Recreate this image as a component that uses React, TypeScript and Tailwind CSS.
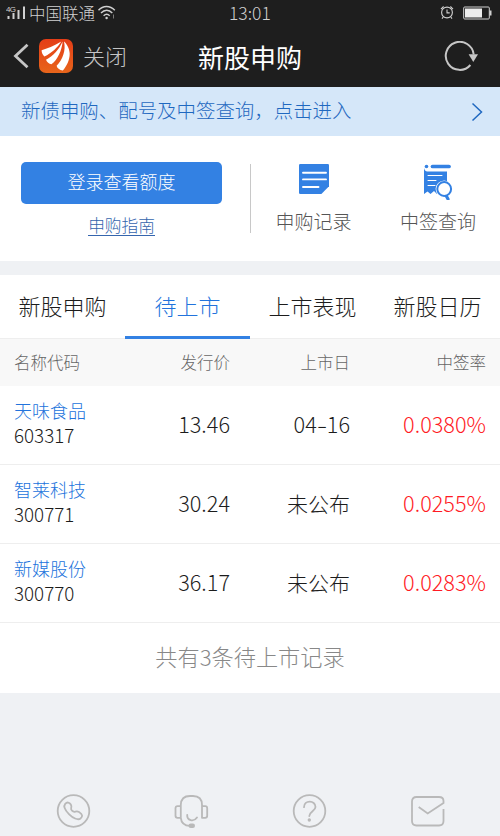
import React from 'react';

const stocks = [
  { name: '天味食品', code: '603317', price: '13.46', date: '04-16', rate: '0.0380%' },
  { name: '智莱科技', code: '300771', price: '30.24', date: '未公布', rate: '0.0255%' },
  { name: '新媒股份', code: '300770', price: '36.17', date: '未公布', rate: '0.0283%' },
];

const tabs = ['新股申购', '待上市', '上市表现', '新股日历'];

const StatusBar: React.FC = () => (
  <div className="flex h-[27px] items-center pb-[2px] pl-[6px] pr-[8px] text-[#d0d0d0]">
    <svg width="20" height="16" viewBox="0 0 20 16" fill="currentColor">
      <text x="0" y="6.5" fontSize="8" fontWeight="400" fontFamily="Liberation Sans" textLength="10">4G</text>
      <rect x="1.5" y="11" width="2" height="3" />
      <rect x="6.5" y="8" width="2" height="6" />
      <rect x="11.5" y="5" width="2" height="9" />
      <rect x="17" y="1.5" width="2" height="12.5" />
    </svg>
    <span className="ml-[3px] w-[67px] whitespace-nowrap text-[16.5px] leading-[24px]">中国联通</span>
    <svg className="ml-px" width="20" height="17" viewBox="0 0 20 17" fill="none" stroke="currentColor" strokeWidth="1.4">
      <path d="M1.5 6.2C6 1.2 13 1.2 17.8 6.2M4 9C7.5 5.3 12 5.3 15.3 9M6.6 11.7C8.6 9.8 10.8 9.8 12.7 11.7" />
      <circle cx="9.6" cy="14" r="1.2" fill="currentColor" stroke="none" />
      <path d="M16.5 10.5v4" strokeWidth="1" opacity="0.5" />
    </svg>
    <span className="ml-[112px] w-[45px] text-[17.5px] leading-[24px]">13:01</span>
    <svg className="ml-auto" width="14" height="15" viewBox="0 0 14 15" fill="none" stroke="currentColor" strokeWidth="1.1">
      <circle cx="7" cy="7.5" r="5.4" />
      <path d="M7 4.5v3.4h2.7M1 4.2L3.6 1.5M13 4.2L10.4 1.5M3.2 12L2 13.6M10.8 12l1.2 1.6" />
    </svg>
    <svg className="ml-[9px]" width="29" height="14" viewBox="0 0 29 14">
      <rect x="0.7" y="1" width="25.6" height="12" rx="1" fill="none" stroke="currentColor" />
      <rect x="2" y="2.5" width="17" height="9" fill="#ececec" />
      <rect x="26.5" y="4.5" width="2" height="5" fill="currentColor" />
    </svg>
  </div>
);

const Header: React.FC = () => (
  <div className="grid h-[60px] grid-cols-[1fr_120px_1fr] items-center pb-[3px]">
    <div className="flex items-center pl-[13px]">
      <svg width="16" height="26" viewBox="0 0 16 26" fill="none" stroke="#c6c6c6" strokeWidth="2.8">
        <path d="M14.5 1.8L2.5 13L14.5 24.2" />
      </svg>
      <svg className="ml-[10px]" width="34" height="34" viewBox="0 0 34 34">
        <defs>
          <linearGradient id="logo" x1="0" y1="0" x2="0" y2="1">
            <stop offset="0" stopColor="#e43d17" />
            <stop offset="1" stopColor="#e8651b" />
          </linearGradient>
        </defs>
        <rect width="34" height="34" rx="7" fill="url(#logo)" />
        <path d="M2.6 11.2C8 9.5 15 7 22.3 2.5C19 8 12.5 14.5 5.4 17.4C3.4 15.5 2.6 13.4 2.6 11.2Z" fill="#fff" />
        <path d="M23.6 2.4C23 11 18.5 21 12.4 25.2C10 25 8 23.2 7 20.7C14 17 20.2 10.2 23.6 2.4Z" fill="#fff" />
        <path d="M25 2.4C28 5 30.5 9.7 30.7 14.5C30.8 21 27.5 27.5 23.8 31.5C20.5 31 18 29 17.6 26.7C24 20 27 11 25 2.4Z" fill="#fff" />
      </svg>
      <span className="ml-[10px] text-[22px] text-[#c4c4c4]">关闭</span>
    </div>
    <h1 className="whitespace-nowrap pt-[3px] text-center text-[26px] font-normal leading-[36px] text-white">新股申购</h1>
    <div className="flex justify-end pr-[21px] pt-[2px]">
      <svg width="35" height="32" viewBox="0 0 35 32">
        <path d="M26.4 24A14 14 0 1 1 29.7 13.5" fill="none" stroke="#c6c6c6" strokeWidth="2" />
        <path d="M24.6 13.2H34L29.3 21Z" fill="#c6c6c6" />
      </svg>
    </div>
  </div>
);

const Banner: React.FC = () => (
  <div className="flex h-[49px] items-center justify-between bg-[#d5e7f9] pl-[21px] pr-[17px] text-[#1f68c0]">
    <span className="whitespace-nowrap pb-[4px] text-[19.45px] leading-[28px]">新债申购、配号及中签查询，点击进入</span>
    <svg width="12" height="20" viewBox="0 0 12 20" fill="none" stroke="currentColor" strokeWidth="1.5">
      <path d="M1.5 1.5L10.5 10L1.5 18.5" />
    </svg>
  </div>
);

const Quota: React.FC = () => (
  <div className="flex h-[125px] bg-white pt-[26px]">
    <div className="ml-[21px] flex w-[201px] flex-col items-center">
      <button className="h-[42px] w-full rounded-[5px] bg-[#3381e3] pb-[3px] text-[18px] text-white">登录查看额度</button>
      <a href="#" className="mt-[12px] border-b border-[#3565ad] text-[16.7px] leading-[19px] text-[#3565ad]">申购指南</a>
    </div>
    <div className="ml-[28px] mt-[2px] h-[69px] w-px bg-[#c8c8c8]" />
    <div className="flex w-[125px] flex-col items-center">
      <svg width="32" height="36" viewBox="0 0 32 36">
        <path d="M2.3 2H29.8Q31 2 31 3.3V24.3L23.4 32H2.3Q1 32 1 30.7V3.3Q1 2 2.3 2Z" fill="#3381e3" />
        <path d="M5 10.7H28M5 17.4H28M5 25H20.5" stroke="#fff" strokeWidth="1.9" strokeLinecap="round" />
      </svg>
      <span className="mt-[9px] text-[19px] leading-[28px] text-[#555]">申购记录</span>
    </div>
    <div className="flex w-[124px] flex-col items-center">
      <svg width="30" height="38" viewBox="0 0 30 38">
        <circle cx="3.5" cy="4.5" r="1.8" fill="#3381e3" />
        <path d="M1 5V32L4.5 29.5L7.5 32L11 29L14 32H24V9.4H4Q1 9 1 5Z" fill="#3381e3" />
        <path d="M9.5 4.5H26" stroke="#3381e3" strokeWidth="3.7" strokeLinecap="round" />
        <path d="M5 13.5H19M5 18.5H13M5 23.5H12" stroke="#fff" strokeWidth="1" strokeLinecap="round" />
        <circle cx="21.2" cy="27" r="8.6" fill="#fff" />
        <path d="M23.3 34L25 37" stroke="#3381e3" strokeWidth="3.2" strokeLinecap="round" />
        <circle cx="21.2" cy="27" r="6.9" fill="#fff" stroke="#3381e3" strokeWidth="2" />
      </svg>
      <span className="mt-[7px] text-[19px] leading-[28px] text-[#555]">中签查询</span>
    </div>
  </div>
);

const StockTable: React.FC = () => (
  <div className="mt-[14px] bg-white">
    <div className="grid h-[64px] grid-cols-4">
      {tabs.map((tab, i) => (
        <button
          key={tab}
          className={
            i === 1
              ? 'whitespace-nowrap border-b-[3px] border-[#3381e3] pb-[2px] text-[22px] leading-[32px] text-[#2273dc]'
              : 'whitespace-nowrap border-b border-[#eee] pb-[4px] text-[22px] leading-[32px] text-[#1c1c1c]'
          }
        >
          {tab}
        </button>
      ))}
    </div>
    <div className="grid h-[47px] grid-cols-[120px_110px_120px_1fr] items-center bg-[#f8f8f8] pl-[14px] pr-[14px] text-[16.5px] text-[#666]">
      <span>名称代码</span>
      <span className="pr-[14px] text-right">发行价</span>
      <span className="pr-[14px] text-right">上市日</span>
      <span className="text-right">中签率</span>
    </div>
    {stocks.map((s) => (
      <div
        key={s.code}
        className="grid h-[79px] grid-cols-[120px_110px_120px_1fr] items-center border-b border-[#eee] px-[14px] pb-[2px] text-[21.7px] text-[#1c1c1c]"
      >
        <div className="pb-[5px]">
          <div className="text-[18px] leading-[26px] text-[#2273dc]">{s.name}</div>
          <div className="text-[18.8px] leading-[24px]">{s.code}</div>
        </div>
        <span className="pr-[14px] text-right">{s.price}</span>
        {s.date.includes('-') ? (
          <span className="pr-[14px] text-right">
            {s.date.split('-')[0]}
            <span className="inline-block w-[10px] origin-center scale-x-[1.4] text-center">-</span>
            {s.date.split('-')[1]}
          </span>
        ) : (
          <span className="pr-[14px] pt-px text-right text-[21px]">{s.date}</span>
        )}
        <span className="text-right text-[#ff1a24]">{s.rate}</span>
      </div>
    ))}
    <div className="flex h-[70px] items-center justify-center pb-[2px] text-[22.2px] text-[#888]">共有3条待上市记录</div>
  </div>
);

const Footer: React.FC = () => (
  <div className="mt-[101px] flex justify-between pl-[56px] pr-[55px]">
    <svg width="35" height="35" viewBox="0 0 35 35" fill="none" stroke="#b9b9b9" strokeWidth="1.8">
      <circle cx="17.5" cy="17" r="15.8" />
      <path d="M9.2 9.8C11 7.8 13.5 8.2 14.8 10.5C16.8 14 13.4 14 16 16.7C18.8 19.6 19.5 16 23 18C26.7 20.2 27 22.5 24.5 24.5C21.8 26.7 16.7 23.8 13.2 20.3C9.7 16.8 7.2 12.2 9.2 9.8Z" />
    </svg>
    <svg width="35" height="35" viewBox="0 0 35 35" fill="none" stroke="#b9b9b9" strokeWidth="1.8" strokeLinejoin="round">
      <path d="M6.8 12.2H3.5Q1.5 12.2 1.5 14.2V21.8Q1.5 23.8 3.5 23.8H6.8ZM28 12.2H31.2Q33.2 12.2 33.2 14.2V21.8Q33.2 23.8 31.2 23.8H28ZM6.8 12V11Q7 2 16 2H19Q28 2 28 11V12M6.8 23.8Q7.5 31.5 16 31.8" />
      <path d="M13.2 20.8C12.8 26.5 19.5 28.5 23 23.5" strokeLinecap="round" />
      <rect x="14.5" y="29.5" width="6.5" height="4.5" rx="2.2" fill="#b9b9b9" stroke="none" />
    </svg>
    <svg width="35" height="35" viewBox="0 0 35 35" fill="none" stroke="#b9b9b9" strokeWidth="1.8">
      <circle cx="17.5" cy="17" r="15.8" />
      <path d="M12 13.2C12 5.8 23.5 5.8 23.5 13C23.5 17 17.3 17.5 17.3 22" strokeLinecap="round" />
      <circle cx="17.3" cy="26" r="1.7" fill="#b9b9b9" stroke="none" />
    </svg>
    <svg width="35" height="35" viewBox="0 0 35 35" fill="none" stroke="#b9b9b9" strokeWidth="1.8">
      <path d="M8.7 12.9L17.7 19.5L33.5 9V7Q33.5 3 29 3H6.5Q2 3 2 7.5V27Q2 31.5 6.5 31.5H29Q33.5 31.5 33.5 27V15" />
    </svg>
  </div>
);

const App: React.FC = () => {
  return (
    <div className="h-[836px] w-[500px] overflow-hidden bg-[#eff1f4] font-['Noto_Sans_CJK_SC',sans-serif] font-light">
      <div className="bg-[#1e1e1e]">
        <StatusBar />
        <Header />
      </div>
      <Banner />
      <Quota />
      <StockTable />
      <Footer />
    </div>
  );
};

export default App;
